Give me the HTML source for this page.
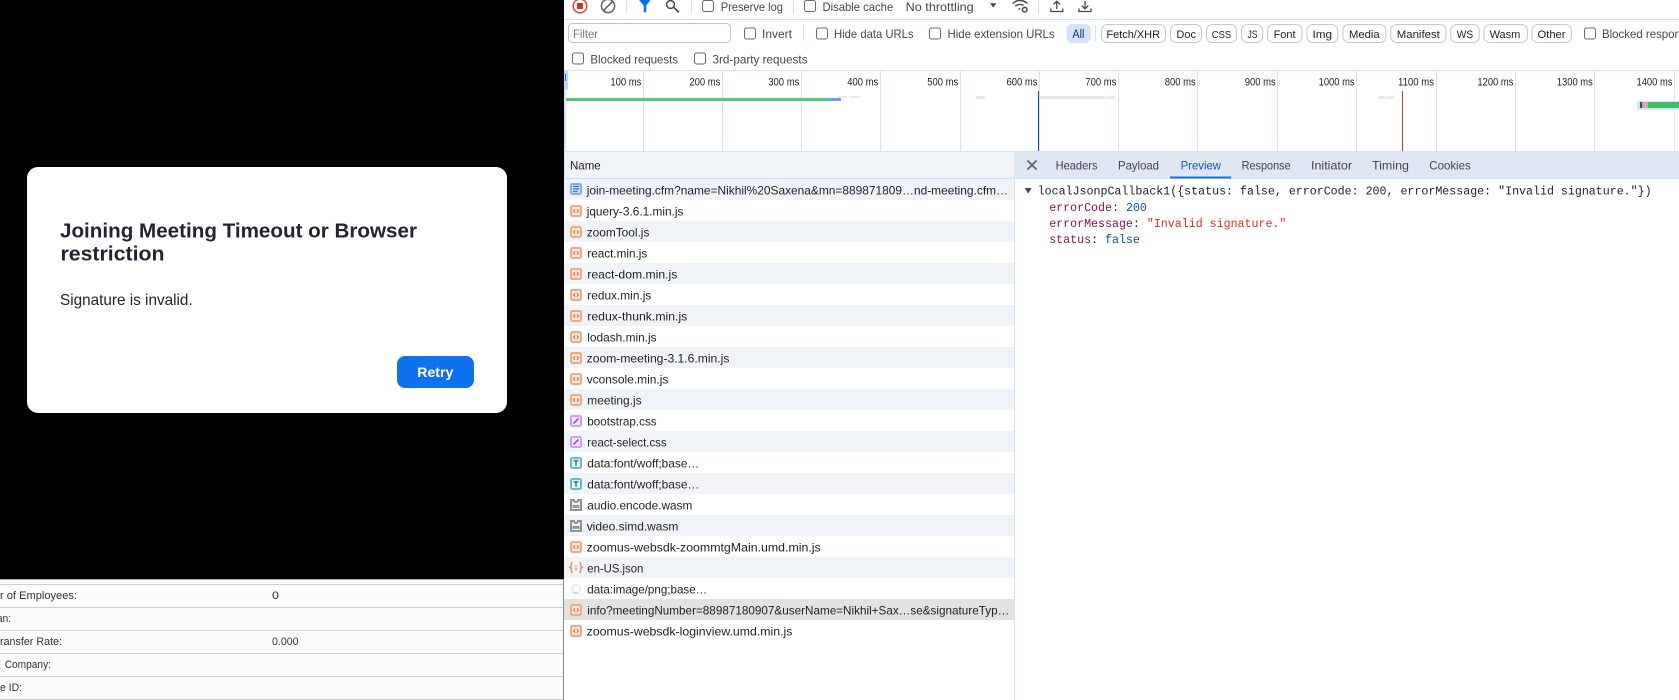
<!DOCTYPE html>
<html lang="en">
<head>
<meta charset="utf-8">
<title>Network panel</title>
<style>
html,body{margin:0;padding:0;width:1679px;height:700px;overflow:hidden;background:#fff}
svg{display:block}
text{font-family:"Liberation Sans",Arial,sans-serif;font-size:12px;fill:#1f1f1f;white-space:pre}
.t{fill:#474747;font-size:12px}
.l{fill:#1f1f1f;font-size:11px}
.n{fill:#1f1f1f;font-size:12px}
.tab{fill:#444;font-size:12px}
.m{font-family:"Liberation Mono",monospace;font-size:11.63px;fill:#1f1f1f}
.k{fill:#8a1052}.v{fill:#0b4fa8}.s{fill:#d92c22}
.b{font-size:11px;fill:#333}
.cb{fill:#fff;stroke:#6a6a6a;stroke-width:1}
.pill{fill:#fff;stroke:#c7c7c7;stroke-width:1}
</style>
</head>
<body>
<svg width="1679" height="700" viewBox="0 0 1679 700" xmlns="http://www.w3.org/2000/svg">
<defs>
<symbol id="js" width="12" height="12" viewBox="0 0 12 12"><rect x="1" y="1" width="10" height="10" rx="1.5" fill="#fdeadf" stroke="#f4a77f" stroke-width="2"/><path d="M5 4.2L3.6 6 5 7.8M7 4.2L8.4 6 7 7.8" fill="none" stroke="#e8703a" stroke-width="1.2"/></symbol>
<symbol id="css" width="12" height="12" viewBox="0 0 12 12"><rect x="1" y="1" width="10" height="10" rx="1.5" fill="#f3e8fd" stroke="#cd9cf6" stroke-width="2"/><path d="M3.5 8.5L8.5 3.5" fill="none" stroke="#9334e6" stroke-width="1.4"/></symbol>
<symbol id="font" width="12" height="12" viewBox="0 0 12 12"><rect x="1" y="1" width="10" height="10" rx="1.5" fill="#e6f5f8" stroke="#66b8ca" stroke-width="2"/><path d="M3.5 3.8h5M6 3.8v5" fill="none" stroke="#12798f" stroke-width="1.4"/></symbol>
<symbol id="wasm" width="12" height="12" viewBox="0 0 12 12"><path d="M1 1H4a2 2 0 0 0 4 0h3v10H1z" fill="#efefef" stroke="#929292" stroke-width="2"/><path d="M3.2 9V6.8h2V9M6.8 9V6.8h2V9" fill="none" stroke="#666" stroke-width="1"/></symbol>
</defs>

<!-- left black page -->
<rect x="0" y="0" width="564" height="579" fill="#000"/>
<rect x="27" y="167" width="480" height="246" rx="11" fill="#fff"/>
<text x="60" y="237.5" style="font-size:20px;font-weight:700;fill:#232333" textLength="357" lengthAdjust="spacingAndGlyphs">Joining Meeting Timeout or Browser</text>
<text x="60.5" y="260.5" style="font-size:20px;font-weight:700;fill:#232333" textLength="104" lengthAdjust="spacingAndGlyphs">restriction</text>
<text x="60" y="305" style="font-size:16px;fill:#232333" textLength="132.7" lengthAdjust="spacingAndGlyphs">Signature is invalid.</text>
<rect x="397" y="356" width="77" height="32" rx="8" fill="#0e72ed"/>
<text x="417.3" y="376.8" style="font-size:14px;font-weight:700;fill:#fff" textLength="36" lengthAdjust="spacingAndGlyphs">Retry</text>

<!-- bottom-left table -->
<g shape-rendering="crispEdges">
<rect x="0" y="579" width="563" height="121" fill="#fbfbfb"/>
<rect x="0" y="579" width="563" height="1" fill="#a8a8a8"/>
<rect x="0" y="584" width="563" height="1" fill="#cfcfcf"/>
<rect x="0" y="607" width="563" height="1" fill="#cfcfcf"/>
<rect x="0" y="630" width="563" height="1" fill="#cfcfcf"/>
<rect x="0" y="653" width="563" height="1" fill="#cfcfcf"/>
<rect x="0" y="676" width="563" height="1" fill="#cfcfcf"/>
<rect x="0" y="699" width="563" height="1" fill="#cfcfcf"/>
<rect x="563" y="579" width="1" height="121" fill="#8a8a8a"/>
</g>
<text class="b" x="0" y="599" textLength="77" lengthAdjust="spacingAndGlyphs">r of Employees:</text>
<text class="b" x="272" y="599" textLength="7" lengthAdjust="spacingAndGlyphs">0</text>
<text class="b" x="-3" y="622" textLength="14" lengthAdjust="spacingAndGlyphs">an:</text>
<text class="b" x="0" y="645" textLength="62" lengthAdjust="spacingAndGlyphs">ransfer Rate:</text>
<text class="b" x="272" y="645" textLength="26.5" lengthAdjust="spacingAndGlyphs">0.000</text>
<text class="b" x="4.7" y="668" textLength="46.3" lengthAdjust="spacingAndGlyphs">Company:</text>
<text class="b" x="0" y="691" textLength="22" lengthAdjust="spacingAndGlyphs">e ID:</text>

<!-- toolbar row 1 -->
<rect x="564" y="19" width="1115" height="1" fill="#d3e3fd" shape-rendering="crispEdges"/>
<circle cx="580" cy="6" r="6.8" fill="#fff" stroke="#e2493c" stroke-width="1.5"/>
<rect x="577" y="3" width="6" height="6" rx=".5" fill="#d93025"/>
<circle cx="608" cy="6" r="6.6" fill="none" stroke="#5f6368" stroke-width="1.5"/>
<path d="M603.3 10.7L612.7 1.3" stroke="#5f6368" stroke-width="1.5"/>
<g fill="#d3e3fd" shape-rendering="crispEdges">
<rect x="626" y="0" width="1" height="14"/><rect x="691" y="0" width="1" height="14"/><rect x="793" y="0" width="1" height="14"/><rect x="1038" y="0" width="1" height="14"/>
</g>
<path d="M639 0H650.5L646.3 5.5V12.3H643.7V5.5Z" fill="#0b70ee"/>
<circle cx="670.5" cy="4.5" r="3.9" fill="none" stroke="#474747" stroke-width="1.5"/>
<path d="M673.6 7.4L679 12.4" stroke="#474747" stroke-width="1.7"/>
<rect class="cb" x="702.5" y=".5" width="11" height="11" rx="2"/>
<text class="t" x="720.7" y="11" textLength="62.3" lengthAdjust="spacingAndGlyphs">Preserve log</text>
<rect class="cb" x="804.5" y=".5" width="11" height="11" rx="2"/>
<text class="t" x="822.5" y="11" textLength="70.7" lengthAdjust="spacingAndGlyphs">Disable cache</text>
<text class="t" x="905.7" y="11" textLength="68" lengthAdjust="spacingAndGlyphs">No throttling</text>
<path d="M990 3.3H996.4L993.2 7.6Z" fill="#474747"/>
<path d="M1012.5 3.5C1016.5 -.5 1023 -.5 1027.5 3.5M1015.3 6.3C1018 4 1021.5 4 1023.5 5.5M1018.6 9.6L1020 8.2" fill="none" stroke="#474747" stroke-width="1.4"/>
<circle cx="1024.7" cy="9.7" r="2.3" fill="none" stroke="#474747" stroke-width="1.5"/>
<path d="M1056.8 9V1.4M1053.5 4.6L1056.8 1.2 1060.1 4.6M1050.8 8.5V11.5H1062.8V8.5" fill="none" stroke="#474747" stroke-width="1.3"/>
<path d="M1085 1V8.8M1081.7 5.6L1085 9 1088.3 5.6M1079 8.5V11.5H1091V8.5" fill="none" stroke="#474747" stroke-width="1.3"/>

<!-- toolbar row 2 -->
<rect x="568.5" y="23.5" width="162" height="19" rx="4" fill="#fff" stroke="#c4c4c4"/>
<text x="573" y="38" style="font-size:12px;fill:#7a7a7a" textLength="25" lengthAdjust="spacingAndGlyphs">Filter</text>
<rect class="cb" x="744.5" y="28" width="11" height="11" rx="2"/>
<text class="t" x="762" y="38" textLength="30" lengthAdjust="spacingAndGlyphs">Invert</text>
<rect x="803" y="25" width="1" height="16" fill="#d3e3fd" shape-rendering="crispEdges"/>
<rect class="cb" x="816.5" y="28" width="11" height="11" rx="2"/>
<text class="t" x="834" y="38" textLength="79.6" lengthAdjust="spacingAndGlyphs">Hide data URLs</text>
<rect class="cb" x="929.5" y="28" width="11" height="11" rx="2"/>
<text class="t" x="947.5" y="38" textLength="107.1" lengthAdjust="spacingAndGlyphs">Hide extension URLs</text>
<rect x="1066.5" y="24" width="24.3" height="19" rx="6" fill="#d3e3fd"/>
<text x="1072.5" y="38" style="font-size:11.5px;fill:#0b2d6b" textLength="11.8" lengthAdjust="spacingAndGlyphs">All</text>
<rect x="1095" y="25" width="1" height="16" fill="#d3e3fd" shape-rendering="crispEdges"/>
<g>
<rect class="pill" x="1101.5" y="24.5" width="64" height="18" rx="6"/>
<rect class="pill" x="1170.5" y="24.5" width="31" height="18" rx="6"/>
<rect class="pill" x="1206.5" y="24.5" width="30" height="18" rx="6"/>
<rect class="pill" x="1241.5" y="24.5" width="21" height="18" rx="6"/>
<rect class="pill" x="1267.5" y="24.5" width="34.5" height="18" rx="6"/>
<rect class="pill" x="1306.8" y="24.5" width="31" height="18" rx="6"/>
<rect class="pill" x="1342.9" y="24.5" width="43" height="18" rx="6"/>
<rect class="pill" x="1390.7" y="24.5" width="55.3" height="18" rx="6"/>
<rect class="pill" x="1450.7" y="24.5" width="28.6" height="18" rx="6"/>
<rect class="pill" x="1484" y="24.5" width="43.5" height="18" rx="6"/>
<rect class="pill" x="1532" y="24.5" width="39.4" height="18" rx="6"/>
</g>
<text class="l" x="1106.4" y="38" textLength="53.6" lengthAdjust="spacingAndGlyphs">Fetch/XHR</text>
<text class="l" x="1176.4" y="38" textLength="19.6" lengthAdjust="spacingAndGlyphs">Doc</text>
<text class="l" x="1211.8" y="38" style="font-size:10.5px" textLength="19.3" lengthAdjust="spacingAndGlyphs">CSS</text>
<text class="l" x="1247.5" y="38" style="font-size:11px" textLength="10" lengthAdjust="spacingAndGlyphs">JS</text>
<text class="l" x="1273.6" y="38" textLength="22" lengthAdjust="spacingAndGlyphs">Font</text>
<text class="l" x="1312.5" y="38" textLength="19.6" lengthAdjust="spacingAndGlyphs">Img</text>
<text class="l" x="1349" y="38" textLength="30.7" lengthAdjust="spacingAndGlyphs">Media</text>
<text class="l" x="1396.8" y="38" textLength="43" lengthAdjust="spacingAndGlyphs">Manifest</text>
<text class="l" x="1456.8" y="38" textLength="16.4" lengthAdjust="spacingAndGlyphs">WS</text>
<text class="l" x="1489.6" y="38" textLength="30.7" lengthAdjust="spacingAndGlyphs">Wasm</text>
<text class="l" x="1537.5" y="38" textLength="28" lengthAdjust="spacingAndGlyphs">Other</text>
<rect class="cb" x="1584.5" y="28" width="11" height="11" rx="2"/>
<text class="t" x="1602" y="38" textLength="133" lengthAdjust="spacingAndGlyphs">Blocked response cookies</text>

<!-- toolbar row 3 -->
<rect class="cb" x="572.5" y="53" width="11" height="11" rx="2"/>
<text class="t" x="590.4" y="63.3" textLength="87.6" lengthAdjust="spacingAndGlyphs">Blocked requests</text>
<rect class="cb" x="694.5" y="53" width="11" height="11" rx="2"/>
<text class="t" x="712.5" y="63.3" textLength="95" lengthAdjust="spacingAndGlyphs">3rd-party requests</text>

<!-- overview -->
<g fill="#d3e3fd" shape-rendering="crispEdges">
<rect x="564" y="70" width="1115" height="1"/>
<rect x="564" y="151" width="1115" height="1"/>
<rect x="564" y="70" width="2" height="82"/>
<rect x="643" y="71" width="1" height="80"/><rect x="722" y="71" width="1" height="80"/><rect x="801" y="71" width="1" height="80"/><rect x="880" y="71" width="1" height="80"/><rect x="960" y="71" width="1" height="80"/><rect x="1039" y="71" width="1" height="80"/><rect x="1118" y="71" width="1" height="80"/><rect x="1197" y="71" width="1" height="80"/><rect x="1277" y="71" width="1" height="80"/><rect x="1356" y="71" width="1" height="80"/><rect x="1436" y="71" width="1" height="80"/><rect x="1515" y="71" width="1" height="80"/><rect x="1594" y="71" width="1" height="80"/><rect x="1674" y="71" width="1" height="80"/>
</g>
<rect x="564" y="71" width="4" height="19" rx="1.5" fill="#c2d7f8"/>
<rect x="565" y="74" width="1" height="7" fill="#1a5fd0"/>
<g>
<text class="l" x="610.4" y="85.7" textLength="31" lengthAdjust="spacingAndGlyphs">100 ms</text>
<text class="l" x="689.4" y="85.7" textLength="31" lengthAdjust="spacingAndGlyphs">200 ms</text>
<text class="l" x="768.3" y="85.7" textLength="31" lengthAdjust="spacingAndGlyphs">300 ms</text>
<text class="l" x="847.2" y="85.7" textLength="31" lengthAdjust="spacingAndGlyphs">400 ms</text>
<text class="l" x="927.2" y="85.7" textLength="31" lengthAdjust="spacingAndGlyphs">500 ms</text>
<text class="l" x="1006.5" y="85.7" textLength="31" lengthAdjust="spacingAndGlyphs">600 ms</text>
<text class="l" x="1085.4" y="85.7" textLength="31" lengthAdjust="spacingAndGlyphs">700 ms</text>
<text class="l" x="1164.7" y="85.7" textLength="31" lengthAdjust="spacingAndGlyphs">800 ms</text>
<text class="l" x="1244.7" y="85.7" textLength="31" lengthAdjust="spacingAndGlyphs">900 ms</text>
<text class="l" x="1318.6" y="85.7" textLength="36" lengthAdjust="spacingAndGlyphs">1000 ms</text>
<text class="l" x="1398" y="85.7" textLength="36" lengthAdjust="spacingAndGlyphs">1100 ms</text>
<text class="l" x="1477.4" y="85.7" textLength="36" lengthAdjust="spacingAndGlyphs">1200 ms</text>
<text class="l" x="1556.8" y="85.7" textLength="36" lengthAdjust="spacingAndGlyphs">1300 ms</text>
<text class="l" x="1636.5" y="85.7" textLength="36" lengthAdjust="spacingAndGlyphs">1400 ms</text>
</g>
<g shape-rendering="crispEdges">
<rect x="566" y="98" width="264" height="3" fill="#55c57a"/>
<rect x="830" y="98" width="11" height="3" fill="#6a9ef5"/>
<g fill="#e8e8e8">
<rect x="838" y="96" width="9" height="2"/><rect x="849" y="96" width="11" height="2"/><rect x="976" y="96" width="9" height="3"/><rect x="1040" y="96" width="65" height="3"/><rect x="1106" y="96" width="9" height="3"/><rect x="1378" y="96" width="7" height="3"/><rect x="1386" y="96" width="8" height="3"/>
</g>
<rect x="1038" y="91" width="1" height="60" fill="#1a4fa8"/>
<rect x="1402" y="91" width="1" height="60" fill="#c8372c"/>
<rect x="1637" y="101" width="42" height="9" fill="#d3e3fd"/>
<rect x="1640" y="102" width="2" height="6" fill="#1c4fa0"/>
<rect x="1642" y="102" width="2" height="6" fill="#f0a91e"/>
<rect x="1644" y="102" width="4" height="6" fill="#d79bf0"/>
<rect x="1648" y="102" width="31" height="6" fill="#3cbf64"/>
</g>

<!-- name header -->
<g shape-rendering="crispEdges">
<rect x="564" y="152" width="450" height="26" fill="#f0f4f9"/>
<rect x="1014" y="152" width="665" height="26" fill="#dfe6f4"/>
<rect x="564" y="178" width="1115" height="1" fill="#cfe0fa"/>
<rect x="564" y="152" width="1" height="27" fill="#d3e3fd"/>
</g>
<text class="n" x="570" y="169.3" textLength="30.7" lengthAdjust="spacingAndGlyphs">Name</text>

<!-- rows backgrounds -->
<g fill="#f0f4f9" shape-rendering="crispEdges">
<rect x="564" y="179" width="450" height="21"/><rect x="564" y="221" width="450" height="21"/><rect x="564" y="263" width="450" height="21"/><rect x="564" y="305" width="450" height="21"/><rect x="564" y="347" width="450" height="21"/><rect x="564" y="389" width="450" height="21"/><rect x="564" y="431" width="450" height="21"/><rect x="564" y="473" width="450" height="21"/><rect x="564" y="515" width="450" height="21"/><rect x="564" y="557" width="450" height="21"/>
</g>
<rect x="564" y="599" width="450" height="21" fill="#e1e3e1" shape-rendering="crispEdges"/>
<rect x="1014" y="179" width="1" height="521" fill="#d3e3fd" shape-rendering="crispEdges"/>

<!-- row icons -->
<rect x="571" y="184" width="10" height="10" rx="1.5" fill="#d3e3fd" stroke="#7fa9f5" stroke-width="2"/>
<path d="M573 186.5h6M573 189h6M573 191.5h4.5" stroke="#2b6fe3" stroke-width="1.2"/>
<use href="#js" x="570" y="205"/>
<use href="#js" x="570" y="226"/>
<use href="#js" x="570" y="247"/>
<use href="#js" x="570" y="268"/>
<use href="#js" x="570" y="289"/>
<use href="#js" x="570" y="310"/>
<use href="#js" x="570" y="331"/>
<use href="#js" x="570" y="352"/>
<use href="#js" x="570" y="373"/>
<use href="#js" x="570" y="394"/>
<use href="#css" x="570" y="415"/>
<use href="#css" x="570" y="436"/>
<use href="#font" x="570" y="457"/>
<use href="#font" x="570" y="478"/>
<use href="#wasm" x="570" y="499"/>
<use href="#wasm" x="570" y="520"/>
<use href="#js" x="570" y="541"/>
<path d="M572.8 562.5c-1.5 0-1.5 1-1.5 2.3s-.3 2.2-1.3 2.7c1 .5 1.3 1.4 1.3 2.7s0 2.3 1.5 2.3M579.2 562.5c1.5 0 1.5 1 1.5 2.3s.3 2.2 1.3 2.7c-1 .5-1.3 1.4-1.3 2.7s0 2.3-1.5 2.3" fill="none" stroke="#ee8a55" stroke-width="1.4"/>
<path d="M576 565.2v.9M576 567.2v3.2" stroke="#e8703a" stroke-width="1.2"/>
<circle cx="576" cy="589" r="4.2" fill="none" stroke="#e3ecfb" stroke-width="1.8"/>
<path d="M572.8 591.6A4.2 4.2 0 0 0 578 592.7" fill="none" stroke="#aac4ee" stroke-width="1.2"/>
<use href="#js" x="570" y="604"/>
<use href="#js" x="570" y="625"/>

<!-- row names -->
<text class="n" x="586.7" y="194.7" textLength="421.3" lengthAdjust="spacingAndGlyphs">join-meeting.cfm?name=Nikhil%20Saxena&amp;mn=889871809…nd-meeting.cfm…</text>
<text class="n" x="586.7" y="215.7" textLength="96.7" lengthAdjust="spacingAndGlyphs">jquery-3.6.1.min.js</text>
<text class="n" x="586.7" y="236.7" textLength="62.7" lengthAdjust="spacingAndGlyphs">zoomTool.js</text>
<text class="n" x="587.3" y="257.7" textLength="60" lengthAdjust="spacingAndGlyphs">react.min.js</text>
<text class="n" x="587.3" y="278.7" textLength="90" lengthAdjust="spacingAndGlyphs">react-dom.min.js</text>
<text class="n" x="587.3" y="299.7" textLength="64" lengthAdjust="spacingAndGlyphs">redux.min.js</text>
<text class="n" x="587.3" y="320.7" textLength="100" lengthAdjust="spacingAndGlyphs">redux-thunk.min.js</text>
<text class="n" x="587.3" y="341.7" textLength="69.3" lengthAdjust="spacingAndGlyphs">lodash.min.js</text>
<text class="n" x="586.7" y="362.7" textLength="142.7" lengthAdjust="spacingAndGlyphs">zoom-meeting-3.1.6.min.js</text>
<text class="n" x="586.7" y="383.7" textLength="81.7" lengthAdjust="spacingAndGlyphs">vconsole.min.js</text>
<text class="n" x="587.3" y="404.7" textLength="54.3" lengthAdjust="spacingAndGlyphs">meeting.js</text>
<text class="n" x="587.3" y="425.7" textLength="69.3" lengthAdjust="spacingAndGlyphs">bootstrap.css</text>
<text class="n" x="587.3" y="446.7" textLength="79.3" lengthAdjust="spacingAndGlyphs">react-select.css</text>
<text class="n" x="587.3" y="467.7" textLength="112" lengthAdjust="spacingAndGlyphs">data:font/woff;base…</text>
<text class="n" x="587.3" y="488.7" textLength="112" lengthAdjust="spacingAndGlyphs">data:font/woff;base…</text>
<text class="n" x="587.3" y="509.7" textLength="105" lengthAdjust="spacingAndGlyphs">audio.encode.wasm</text>
<text class="n" x="586.7" y="530.7" textLength="91.7" lengthAdjust="spacingAndGlyphs">video.simd.wasm</text>
<text class="n" x="586.7" y="551.7" textLength="234" lengthAdjust="spacingAndGlyphs">zoomus-websdk-zoommtgMain.umd.min.js</text>
<text class="n" x="587.3" y="572.7" textLength="56" lengthAdjust="spacingAndGlyphs">en-US.json</text>
<text class="n" x="587.3" y="593.7" textLength="120" lengthAdjust="spacingAndGlyphs">data:image/png;base…</text>
<text class="n" x="587.3" y="614.7" textLength="422" lengthAdjust="spacingAndGlyphs">info?meetingNumber=88987180907&amp;userName=Nikhil+Sax…se&amp;signatureTyp…</text>
<text class="n" x="586.7" y="635.7" textLength="205.7" lengthAdjust="spacingAndGlyphs">zoomus-websdk-loginview.umd.min.js</text>

<!-- detail tabs -->
<path d="M1027.5 160.5L1036.5 169.5M1036.5 160.5L1027.5 169.5" stroke="#5f6368" stroke-width="1.7"/>
<text class="tab" x="1055.6" y="169.3" textLength="41.9" lengthAdjust="spacingAndGlyphs">Headers</text>
<text class="tab" x="1118" y="169.3" textLength="41" lengthAdjust="spacingAndGlyphs">Payload</text>
<text class="tab" x="1180.6" y="169.3" style="fill:#0b57d0" textLength="40.4" lengthAdjust="spacingAndGlyphs">Preview</text>
<rect x="1170" y="176.5" width="61" height="2" fill="#1a73e8" shape-rendering="crispEdges"/>
<text class="tab" x="1241.6" y="169.3" textLength="49.1" lengthAdjust="spacingAndGlyphs">Response</text>
<text class="tab" x="1311" y="169.3" textLength="41" lengthAdjust="spacingAndGlyphs">Initiator</text>
<text class="tab" x="1372" y="169.3" textLength="37" lengthAdjust="spacingAndGlyphs">Timing</text>
<text class="tab" x="1429.3" y="169.3" textLength="41.4" lengthAdjust="spacingAndGlyphs">Cookies</text>

<!-- preview -->
<path d="M1024.8 188H1031.6L1028.2 193.6Z" fill="#474747"/>
<text class="m" x="1037.7" y="194.7" xml:space="preserve">localJsonpCallback1({status: false, errorCode: 200, errorMessage: "Invalid signature."})</text>
<text class="m" x="1049.2" y="211" xml:space="preserve"><tspan class="k">errorCode</tspan>: <tspan class="v">200</tspan></text>
<text class="m" x="1049.2" y="227" xml:space="preserve"><tspan class="k">errorMessage</tspan>: <tspan class="s">"Invalid signature."</tspan></text>
<text class="m" x="1049.2" y="243" xml:space="preserve"><tspan class="k">status</tspan>: <tspan class="v">false</tspan></text>
</svg>
</body>
</html>
